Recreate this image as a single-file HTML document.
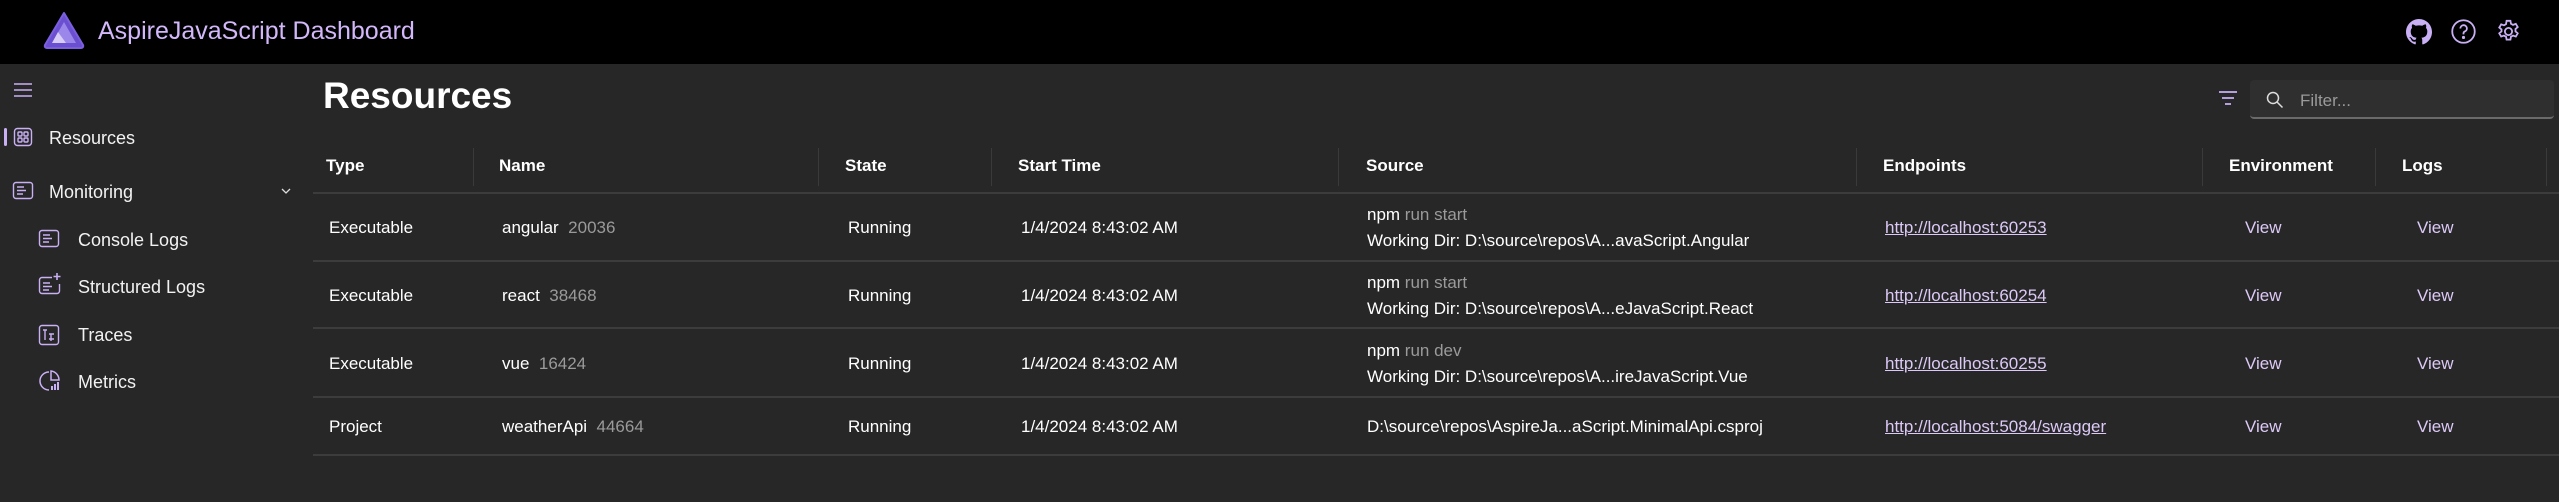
<!DOCTYPE html>
<html><head><meta charset="utf-8"><style>
*{margin:0;padding:0;box-sizing:border-box}
body{width:2559px;height:502px;background:#272727;font-family:"Liberation Sans",sans-serif;color:#fff;position:relative;overflow:hidden;font-size:17px}
.a{position:absolute;white-space:nowrap}
.hdr{position:absolute;left:0;top:0;width:2559px;height:64px;background:#000}
.p{color:#c9b0f5}
.g{color:#9a9a9a}
.th{font-weight:bold;font-size:17px;top:156px}
.sep{position:absolute;top:148px;width:1px;height:38px;background:#3a3a3a}
.hl{position:absolute;left:313px;width:2246px;height:2px;background:#3c3c3c}
.lk{color:#dcc9f7;text-decoration:underline}
.v{color:#dcc9f7}
.nav{font-size:18px;color:#f2f2f2}
</style></head><body>
<div class="hdr"></div>
<svg class="a" style="left:42px;top:10px" width="44" height="40" viewBox="0 0 44 40">
<path d="M22 3 L41 35 Q42 38 38 38 L6 38 Q2 38 3 35 Z" fill="#6a4fd0" stroke="#7b5fe0" stroke-width="2" stroke-linejoin="round"/>
<path d="M22 12 L34 33 L10 33 Z" fill="#9b86ea"/>
<path d="M16 22 L24 33 L10 33 Z" fill="#d6ccf7"/>
</svg>
<div class="a p" style="left:98px;top:17px;font-size:25px;color:#d2b8fa">AspireJavaScript Dashboard</div>
<svg class="a" style="left:2406px;top:19px" width="26" height="26" viewBox="0 0 16 16"><path fill="#c9b0f5" d="M8 0C3.58 0 0 3.580 0 8c0 3.54 2.29 6.53 5.47 7.59.4.07.55-.17.55-.38v-1.33c-2.23.48-2.7-1.070-2.7-1.07-.36-.92-.89-1.17-.89-1.17-.73-.5.06-.49.06-.49.8.06 1.23.83 1.23.83.71 1.22 1.87.87 2.33.66.07-.52.28-.87.51-1.07-1.78-.2-3.65-.89-3.65-3.95 0-.87.31-1.59.82-2.15-.08-.2-.36-1.02.08-2.12 0 0 .67-.21 2.2.82a7.6 7.6 0 0 1 4 0c1.53-1.04 2.2-.82 2.2-.82.44 1.1.16 1.92.08 2.12.51.56.82 1.27.82 2.15 0 3.07-1.87 3.75-3.65 3.95.29.25.54.73.54 1.48v2.2c0 .21.15.46.55.38A8.01 8.01 0 0 0 16 8c0-4.42-3.58-8-8-8z"/></svg>
<svg class="a" style="left:2450px;top:18px" width="27" height="27" viewBox="0 0 24 24" fill="none" stroke="#c9b0f5" stroke-width="1.6"><circle cx="12" cy="12" r="10"/><path d="M9.2 9.3a2.9 2.9 0 1 1 3.9 2.7c-.7.3-1.1.9-1.1 1.7v.8"/><circle cx="12" cy="17.3" r=".6" fill="#c9b0f5"/></svg>
<svg class="a" style="left:2495px;top:18px" width="27" height="27" viewBox="0 0 24 24" fill="none" stroke="#c9b0f5" stroke-width="1.6"><circle cx="12" cy="12" r="3.2"/><path d="M10.3 2.5h3.4l.5 2.6 1.8 1 2.5-.9 1.7 2.9-2 1.7v2.1l2 1.7-1.7 2.9-2.5-.9-1.8 1-.5 2.6h-3.4l-.5-2.6-1.8-1-2.5.9-1.7-2.9 2-1.7V10.2l-2-1.7 1.7-2.9 2.5.9 1.8-1z"/></svg>
<svg class="a" style="left:12px;top:80px" width="22" height="20" viewBox="0 0 22 20" stroke="#c9b0f5" stroke-width="1.6"><path d="M2 4h18M2 10h18M2 16h18"/></svg>
<div class="a" style="left:4px;top:128px;width:3px;height:18px;background:#c9b0f5;border-radius:2px"></div>
<svg class="a" style="left:13px;top:127px" width="20" height="20" viewBox="0 0 20 20" fill="none" stroke="#c9b0f5" stroke-width="1.4"><rect x="1.5" y="1.5" width="17" height="17" rx="3"/><rect x="5" y="5" width="4" height="4" rx="1"/><rect x="11" y="5" width="4" height="4" rx="1"/><rect x="5" y="11" width="4" height="4" rx="1"/><rect x="11" y="11" width="4" height="4" rx="1"/></svg>
<div class="a nav" style="left:49px;top:128px">Resources</div>
<svg class="a" style="left:12px;top:181px" width="22" height="20" viewBox="0 0 22 20" fill="none" stroke="#c9b0f5" stroke-width="1.4"><rect x="1.5" y="1.5" width="19" height="16" rx="2.5"/><path d="M5 6h7M5 9.5h9M5 13h6"/></svg>
<div class="a nav" style="left:49px;top:182px">Monitoring</div>
<svg class="a" style="left:280px;top:186px" width="12" height="10" viewBox="0 0 12 10" fill="none" stroke="#ddd" stroke-width="1.3"><path d="M2 3l4 4 4-4"/></svg>
<svg class="a" style="left:38px;top:229px" width="22" height="20" viewBox="0 0 22 20" fill="none" stroke="#c9b0f5" stroke-width="1.4"><rect x="1.5" y="1.5" width="19" height="16" rx="2.5"/><path d="M5 6h7M5 9.5h9M5 13h6"/></svg>
<div class="a nav" style="left:78px;top:230px">Console Logs</div>
<svg class="a" style="left:38px;top:272px" width="24" height="24" viewBox="0 0 24 24" fill="none" stroke="#c9b0f5" stroke-width="1.4"><path d="M14 5.5H4a2.5 2.5 0 0 0-2.5 2.5v11A2.5 2.5 0 0 0 4 21.5h15a2.5 2.5 0 0 0 2.5-2.5v-7"/><path d="M5 11h7M5 14.5h9M5 18h6"/><path d="M19 1v7M15.5 4.5h7" stroke-width="1.6"/></svg>
<div class="a nav" style="left:78px;top:277px">Structured Logs</div>
<svg class="a" style="left:38px;top:324px" width="22" height="22" viewBox="0 0 22 22" fill="none" stroke="#c9b0f5" stroke-width="1.4"><rect x="1.5" y="1.5" width="19" height="19" rx="2.5"/><path d="M5 6h4M7 6v10M11 10h5M13 10v7M11 15h5"/></svg>
<div class="a nav" style="left:78px;top:325px">Traces</div>
<svg class="a" style="left:38px;top:369px" width="24" height="24" viewBox="0 0 24 24" fill="none" stroke="#c9b0f5" stroke-width="1.5"><path d="M11 3a9 9 0 1 0 0 18"/><path d="M13 2v9h8a9 9 0 0 0-8-9z"/><path d="M14 21v-4M17 21v-6M20 21v-8" stroke-width="2"/></svg>
<div class="a nav" style="left:78px;top:372px">Metrics</div>
<div class="a" style="left:323px;top:75px;font-size:37px;font-weight:bold">Resources</div>
<svg class="a" style="left:2217px;top:89px" width="22" height="20" viewBox="0 0 22 20" stroke="#c9b0f5" stroke-width="1.8"><path d="M2 3h18M5 9h12M8 15h6"/></svg>
<div class="a" style="left:2250px;top:80px;width:304px;height:39px;background:#2f2f2f;border-radius:4px;border-bottom:2px solid #6a6a6a"></div>
<svg class="a" style="left:2265px;top:90px" width="20" height="20" viewBox="0 0 20 20" fill="none" stroke="#ddd" stroke-width="1.5"><circle cx="8" cy="8" r="5.5"/><path d="M12 12l5.5 5.5"/></svg>
<div class="a" style="left:2300px;top:91px;color:#9a9a9a">Filter...</div>
<div class="a th" style="left:326px">Type</div>
<div class="a th" style="left:499px">Name</div>
<div class="a th" style="left:845px">State</div>
<div class="a th" style="left:1018px">Start Time</div>
<div class="a th" style="left:1366px">Source</div>
<div class="a th" style="left:1883px">Endpoints</div>
<div class="a th" style="left:2229px">Environment</div>
<div class="a th" style="left:2402px">Logs</div>
<div class="sep" style="left:473px"></div><div class="sep" style="left:818px"></div><div class="sep" style="left:991px"></div><div class="sep" style="left:1338px"></div><div class="sep" style="left:1856px"></div><div class="sep" style="left:2202px"></div><div class="sep" style="left:2375px"></div><div class="sep" style="left:2546px"></div>
<div class="hl" style="top:192px"></div><div class="hl" style="top:260px"></div><div class="hl" style="top:327px"></div><div class="hl" style="top:396px"></div><div class="hl" style="top:454px"></div>
<div class="a" style="left:329px;top:218px">Executable</div>
<div class="a" style="left:502px;top:218px">angular&nbsp;&nbsp;<span class="g">20036</span></div>
<div class="a" style="left:848px;top:218px">Running</div>
<div class="a" style="left:1021px;top:218px">1/4/2024 8:43:02 AM</div>
<div class="a" style="left:1367px;top:205px">npm <span class="g">run start</span></div>
<div class="a" style="left:1367px;top:231px">Working Dir: D:\source\repos\A...avaScript.Angular</div>
<div class="a lk" style="left:1885px;top:218px">http://localhost:60253</div>
<div class="a v" style="left:2245px;top:218px">View</div>
<div class="a v" style="left:2417px;top:218px">View</div>
<div class="a" style="left:329px;top:286px">Executable</div>
<div class="a" style="left:502px;top:286px">react&nbsp;&nbsp;<span class="g">38468</span></div>
<div class="a" style="left:848px;top:286px">Running</div>
<div class="a" style="left:1021px;top:286px">1/4/2024 8:43:02 AM</div>
<div class="a" style="left:1367px;top:273px">npm <span class="g">run start</span></div>
<div class="a" style="left:1367px;top:299px">Working Dir: D:\source\repos\A...eJavaScript.React</div>
<div class="a lk" style="left:1885px;top:286px">http://localhost:60254</div>
<div class="a v" style="left:2245px;top:286px">View</div>
<div class="a v" style="left:2417px;top:286px">View</div>
<div class="a" style="left:329px;top:354px">Executable</div>
<div class="a" style="left:502px;top:354px">vue&nbsp;&nbsp;<span class="g">16424</span></div>
<div class="a" style="left:848px;top:354px">Running</div>
<div class="a" style="left:1021px;top:354px">1/4/2024 8:43:02 AM</div>
<div class="a" style="left:1367px;top:341px">npm <span class="g">run dev</span></div>
<div class="a" style="left:1367px;top:367px">Working Dir: D:\source\repos\A...ireJavaScript.Vue</div>
<div class="a lk" style="left:1885px;top:354px">http://localhost:60255</div>
<div class="a v" style="left:2245px;top:354px">View</div>
<div class="a v" style="left:2417px;top:354px">View</div>
<div class="a" style="left:329px;top:417px">Project</div>
<div class="a" style="left:502px;top:417px">weatherApi&nbsp;&nbsp;<span class="g">44664</span></div>
<div class="a" style="left:848px;top:417px">Running</div>
<div class="a" style="left:1021px;top:417px">1/4/2024 8:43:02 AM</div>
<div class="a" style="left:1367px;top:417px">D:\source\repos\AspireJa...aScript.MinimalApi.csproj</div>
<div class="a lk" style="left:1885px;top:417px">http://localhost:5084/swagger</div>
<div class="a v" style="left:2245px;top:417px">View</div>
<div class="a v" style="left:2417px;top:417px">View</div>
</body></html>
